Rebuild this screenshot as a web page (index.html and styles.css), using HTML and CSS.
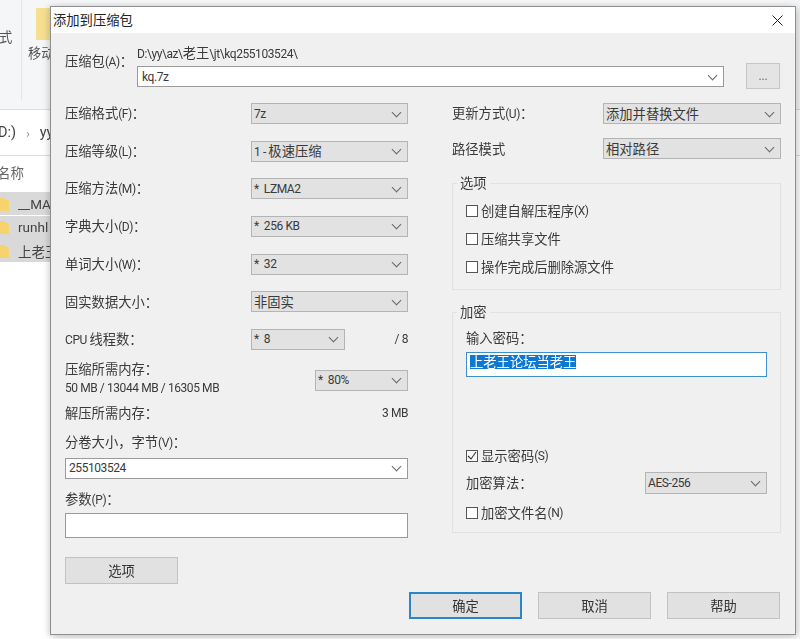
FILE: index.html
```html
<!DOCTYPE html>
<html lang="zh-CN">
<head>
<meta charset="utf-8">
<title>添加到压缩包</title>
<link rel="stylesheet" href="styles.css">
</head>
<body>
<div class="desktop">
  <div class="explorer">
    <div class="ribbon">
      <div class="ribbon-cut">式</div>
      <div class="ribbon-move">
        <div class="ribbon-folder"></div>
        <div class="ribbon-label">移动</div>
      </div>
    </div>
    <div class="address"><span class="l crumb">D:)</span><span class="crumb-sep">›</span><span class="l crumb">yy</span></div>
    <div class="column-head">名称</div>
    <div class="file-list">
      <div class="file-row"><svg class="folder" viewBox="0 0 10 16"><path d="M0 2h4l2 2h3v11H0z" fill="#f6d36f"/></svg><span class="l file-name">__MACOSX</span></div>
      <div class="file-row"><svg class="folder" viewBox="0 0 10 16"><path d="M0 2h4l2 2h3v11H0z" fill="#f6d36f"/></svg><span class="l file-name">runhl</span></div>
      <div class="file-row"><svg class="folder" viewBox="0 0 10 16"><path d="M0 2h4l2 2h3v11H0z" fill="#f6d36f"/></svg><span class="file-name">上老王</span></div>
    </div>
  </div>

  <div class="dialog">
    <div class="titlebar">
      <span>添加到压缩包</span>
      <svg class="close" viewBox="0 0 11 11"><path d="M.5.5l10 10M10.5.5l-10 10" fill="none" stroke="#222" stroke-width="1"/></svg>
    </div>
    <div class="dialog-body">
      <div class="archive">
        <div class="archive-label">压缩包<span class="l">(A)</span>：</div>
        <div class="archive-field">
          <div class="path"><span class="l">D:\yy\az\</span>老王<span class="l">\jt\kq255103524\</span></div>
          <div class="input combo archive-input l">kq.7z</div>
        </div>
        <div class="browse">...</div>
      </div>

      <div class="columns">
        <div class="left-col">
          <div class="row"><span>压缩格式<span class="l">(F)</span>：</span><div class="select sel-wide"><span class="l">7z</span></div></div>
          <div class="row"><span>压缩等级<span class="l">(L)</span>：</span><div class="select sel-wide"><span><span class="l">1 - </span>极速压缩</span></div></div>
          <div class="row"><span>压缩方法<span class="l">(M)</span>：</span><div class="select sel-wide"><span class="l">*&nbsp; LZMA2</span></div></div>
          <div class="row"><span>字典大小<span class="l">(D)</span>：</span><div class="select sel-wide"><span class="l">*&nbsp; 256 KB</span></div></div>
          <div class="row"><span>单词大小<span class="l">(W)</span>：</span><div class="select sel-wide"><span class="l">*&nbsp; 32</span></div></div>
          <div class="row"><span>固实数据大小：</span><div class="select sel-wide"><span>非固实</span></div></div>
          <div class="row"><span class="cpu-label"><span class="l">CPU </span>线程数：</span><div class="select sel-cpu"><span class="l">*&nbsp; 8</span></div><span class="l cpu-total">/ 8</span></div>

          <div class="memory">
            <div>压缩所需内存：<div class="l mem-values">50 MB / 13044 MB / 16305 MB</div></div>
            <div class="select sel-mem"><span class="l">*&nbsp; 80%</span></div>
          </div>
          <div class="unpack"><span>解压所需内存：</span><span class="l">3 MB</span></div>
          <div class="volume-label">分卷大小，字节<span class="l">(V)</span>：</div>
          <div class="input combo volume-input l">255103524</div>
          <div class="param-label">参数<span class="l">(P)</span>：</div>
          <div class="input param-input"></div>
          <div class="button options-button">选项</div>
        </div>

        <div class="right-col">
          <div class="row"><span>更新方式<span class="l">(U)</span>：</span><div class="select sel-right"><span>添加并替换文件</span></div></div>
          <div class="row path-mode"><span>路径模式</span><div class="select sel-right"><span>相对路径</span></div></div>

          <fieldset class="group group-options">
            <legend>选项</legend>
            <div class="check"><span class="box"></span>创建自解压程序<span class="l">(X)</span></div>
            <div class="check"><span class="box"></span>压缩共享文件</div>
            <div class="check"><span class="box"></span>操作完成后删除源文件</div>
          </fieldset>

          <fieldset class="group group-crypt">
            <legend>加密</legend>
            <div class="pw-label">输入密码：</div>
            <div class="pw-input"><span class="selected">上老王论坛当老王</span></div>
            <div class="check show-pw"><span class="box"><svg viewBox="0 0 12 12"><path d="M2 6l3 3 5-7" fill="none" stroke="#333" stroke-width="1.1"/></svg></span>显示密码<span class="l">(S)</span></div>
            <div class="algo"><span>加密算法：</span><div class="select sel-algo"><span class="l">AES-256</span></div></div>
            <div class="check encrypt-names"><span class="box"></span>加密文件名<span class="l">(N)</span></div>
          </fieldset>
        </div>
      </div>

      <div class="footer">
        <div class="button button-primary">确定</div>
        <div class="button">取消</div>
        <div class="button">帮助</div>
      </div>
    </div>
  </div>
</div>
</body>
</html>
```

FILE: styles.css
```css
* { box-sizing: border-box; }
html, body { margin: 0; padding: 0; }
body {
  width: 800px;
  height: 639px;
  overflow: hidden;
  background: #fff;
  font-family: "Noto Sans CJK SC", sans-serif;
  font-size: 13.3px;
  line-height: 16px;
  color: #3a3a3a;
}
.l {
  font-family: Roboto, "Noto Sans", sans-serif;
  font-size: 12px;
  letter-spacing: -0.42px;
}
.desktop {
  position: relative;
  width: 800px;
  height: 639px;
  overflow: hidden;
  filter: blur(0.35px);
}

/* explorer behind the dialog */
.explorer { width: 800px; }
.ribbon {
  display: flex;
  height: 110px;
  background: #f5f6f7;
  border-bottom: 1px solid #dcdcdc;
}
.ribbon-cut {
  width: 23px;
  height: 100px;
  padding-top: 29px;
  margin-left: -1px;
  border-right: 1px solid #e4e4e4;
  color: #555;
}
.ribbon-move { padding: 8px 0 0 14px; }
.ribbon-folder { width: 16px; height: 32px; background: #f6e08f; }
.ribbon-label { margin: 5px 0 0 -8px; color: #555; white-space: nowrap; }
.address {
  display: flex;
  align-items: center;
  gap: 10px;
  height: 46px;
  margin-left: -2px;
  border-bottom: 1px solid #dcdcdc;
}
.crumb { font-size: 14.5px; color: #444; letter-spacing: 0; }
.crumb-sep { color: #888; font-size: 12px; }
.column-head { height: 36px; padding: 8px 0 0 0; margin-left: -3px; color: #666; font-size: 13.5px; }
.file-row {
  display: flex;
  align-items: center;
  gap: 8px;
  width: 60px;
  height: 23px;
  margin-bottom: 0.5px;
  background: #d9d9d9;
}
.folder { width: 10px; height: 16px; flex: none; }
.file-name { font-size: 13.5px; white-space: nowrap; color: #444; letter-spacing: 0; }

/* dialog */
.dialog {
  position: absolute;
  left: 50px;
  top: 6px;
  width: 746px;
  height: 629px;
  background: #f0f0f0;
  border: 1px solid #8f8f8f;
  box-shadow: 2px 2px 8px rgba(0, 0, 0, 0.22), -3px 0 6px rgba(0, 0, 0, 0.08);
}
.titlebar {
  display: flex;
  align-items: center;
  justify-content: space-between;
  height: 26px;
  padding: 0 12px 0 2px;
  background: #fff;
  color: #222;
}
.close { width: 11px; height: 11px; }
.dialog-body { padding: 14px 14px 0 14px; }

.archive { display: flex; height: 42px; }
.archive-label { width: 72px; padding-top: 6px; flex: none; }
.archive-field { width: 587px; flex: none; }
.path { height: 21px; margin-top: -2px; line-height: 15px; }
.archive-input { height: 21px; padding-left: 4px; }
.browse {
  width: 34px;
  height: 26px;
  margin: 16px 0 0 22px;
  background: #e4e4e4;
  border: 1px solid #c6c6c6;
  text-align: center;
  color: #666;
  font-size: 11px;
  line-height: 22px;
}

.input {
  position: relative;
  display: flex;
  align-items: center;
  background: #fff;
  border: 1px solid #9a9a9a;
}
.combo::after, .select::after {
  content: "";
  position: absolute;
  right: 7px;
  top: 50%;
  width: 6px;
  height: 6px;
  margin-top: -5px;
  border-right: 1px solid #666;
  border-bottom: 1px solid #666;
  transform: rotate(45deg);
}
.select {
  position: relative;
  display: flex;
  align-items: center;
  flex: none;
  height: 21px;
  padding-left: 2px;
  background: #e2e2e2;
  border: 1px solid #b4b4b4;
}

.columns { display: grid; grid-template-columns: 343px 329px; column-gap: 44px; margin-top: 14px; }
.left-col, .right-col { display: flex; flex-direction: column; }
.row { display: flex; align-items: center; justify-content: space-between; height: 21px; }
.left-col .row { margin-bottom: 16.67px; }
.sel-wide { width: 157px; }
.cpu-label { width: 186px; }
.sel-cpu { width: 94px; }
.cpu-total { margin-left: auto; font-size: 12px; }
.memory {
  display: flex;
  align-items: flex-start;
  justify-content: space-between;
  height: 36px;
  margin-top: -6px;
}
.mem-values { margin-top: 2px; line-height: 18px; }
.sel-mem { width: 93px; margin-top: 9px; }
.unpack { display: flex; align-items: center; justify-content: space-between; height: 16px; margin-top: 8px; }
.volume-label { margin-top: 13px; }
.volume-input { height: 21px; margin-top: 7px; padding-left: 3px; }
.param-label { margin-top: 12px; }
.param-input { height: 25px; margin-top: 5px; }
.button {
  width: 113px;
  height: 27px;
  background: #e1e1e1;
  border: 1px solid #c2c2c2;
  text-align: center;
  line-height: 25px;
  color: #333;
}
.options-button { margin-top: 19px; }
.footer {
  display: flex;
  justify-content: flex-end;
  gap: 16px;
  margin: 8px 1px 0 0;
}
.button-primary { border: 2px solid #2b86c8; line-height: 23px; }

.sel-right { width: 178px; }
.path-mode { margin-top: 14px; }
.group {
  margin: 0;
  min-width: 0;
  padding: 0 0 0 13px;
  border: 1px solid #e2e2e2;
}
.group legend { margin-left: -9px; padding: 0 3px; line-height: 16px; }
.group-options { margin-top: 16px; height: 115px; padding-top: 12px; }
.group-options .check + .check { margin-top: 12px; }
.group-crypt { margin-top: 14px; height: 229px; padding-top: 10px; }
.check { display: flex; align-items: center; height: 16px; }
.box {
  display: block;
  flex: none;
  width: 12px;
  height: 12px;
  margin-right: 3px;
  background: #fff;
  border: 1px solid #555;
}
.box svg { display: block; width: 12px; height: 12px; margin: -1px; }
.pw-input {
  display: flex;
  align-items: center;
  width: 301px;
  height: 25px;
  margin-top: 6px;
  padding: 0 0 5px 3px;
  background: #fff;
  border: 1px solid #3d8fce;
}
.selected { background: #0c78d2; color: #fff; line-height: 14px; }
.show-pw { margin-top: 71px; }
.show-pw .box { background: #f8f8f8; }
.algo { display: flex; align-items: center; justify-content: space-between; width: 301px; height: 22px; margin-top: 8px; }
.sel-algo { width: 122px; height: 22px; background: #e2e2e2; }
.encrypt-names { margin-top: 11px; }
```
